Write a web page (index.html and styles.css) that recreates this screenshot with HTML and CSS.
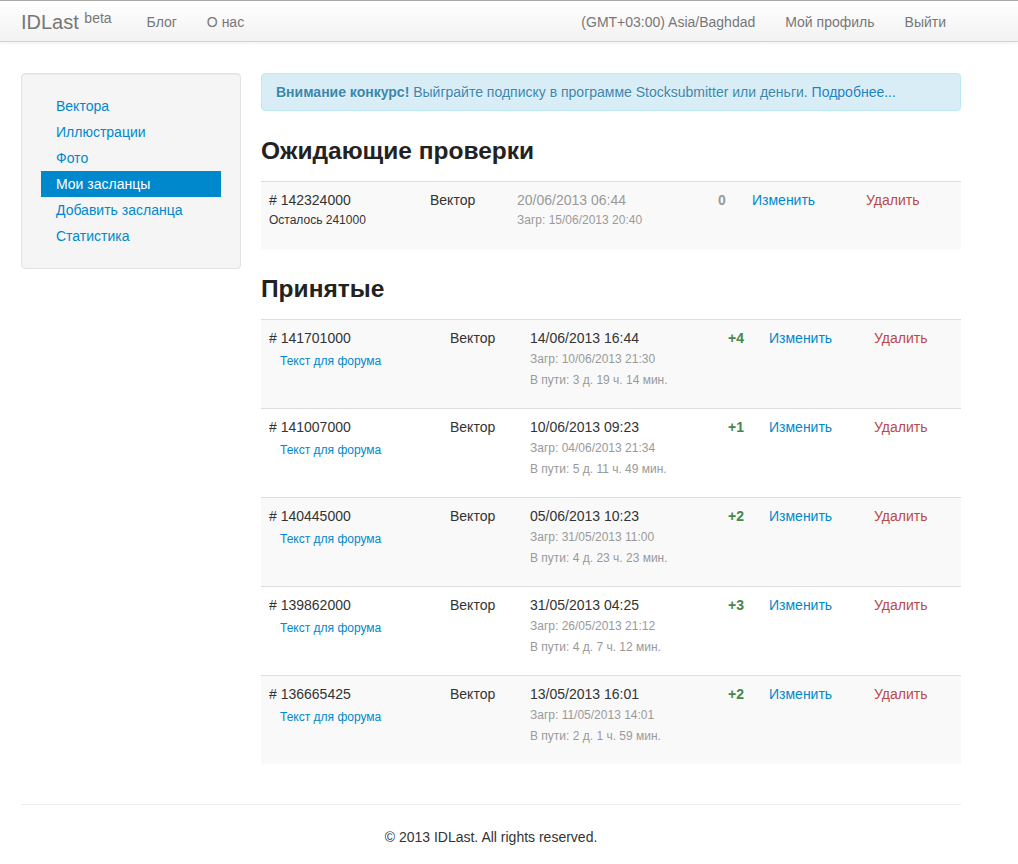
FILE: index.html
```html
<!DOCTYPE html>
<html lang="ru">
<head>
<meta charset="utf-8">
<title>IDLast</title>
<link rel="stylesheet" href="styles.css">
</head>
<body>
<div class="navbar">
  <div class="navbar-in">
    <a class="brand" href="#">IDLast <sup>beta</sup></a>
    <ul class="nav">
      <li><a href="#">Блог</a></li>
      <li><a href="#">О нас</a></li>
    </ul>
    <ul class="nav nav-right">
      <li><a href="#">(GMT+03:00) Asia/Baghdad</a></li>
      <li><a href="#">Мой профиль</a></li>
      <li><a href="#">Выйти</a></li>
    </ul>
  </div>
</div>

<div class="container">
  <div class="row">
    <div class="sidebar">
      <div class="well">
        <ul class="nav-list">
          <li><a href="#">Вектора</a></li>
          <li><a href="#">Иллюстрации</a></li>
          <li><a href="#">Фото</a></li>
          <li class="active"><a href="#">Мои засланцы</a></li>
          <li><a href="#">Добавить засланца</a></li>
          <li><a href="#">Статистика</a></li>
        </ul>
      </div>
    </div>
    <div class="main">
      <div class="alert"><strong>Внимание конкурс!</strong> Выйграйте подписку в программе Stocksubmitter или деньги. <a href="#">Подробнее...</a></div>

      <h3>Ожидающие проверки</h3>
      <table class="table t1">
        <colgroup><col class="c1"><col class="c2"><col class="c3"><col class="c4"><col class="c5"><col class="c6"></colgroup>
        <tbody>
          <tr>
            <td># 142324000<p class="small">Осталось 241000</p></td>
            <td>Вектор</td>
            <td><span class="muted">20/06/2013 06:44</span><div class="small muted">Загр: 15/06/2013 20:40</div></td>
            <td><b class="muted">0</b></td>
            <td><a href="#">Изменить</a></td>
            <td><a class="del" href="#">Удалить</a></td>
          </tr>
        </tbody>
      </table>

      <h3>Принятые</h3>
      <table class="table t2">
        <colgroup><col class="c1"><col class="c2"><col class="c3"><col class="c4"><col class="c5"><col class="c6"></colgroup>
        <tbody>
          <tr>
            <td># 141701000<div><a class="forum" href="#">Текст для форума</a></div></td>
            <td>Вектор</td>
            <td>14/06/2013 16:44<p class="small muted">Загр: 10/06/2013 21:30<br>В пути: 3 д. 19 ч. 14 мин.</p></td>
            <td><b class="plus">+4</b></td>
            <td><a href="#">Изменить</a></td>
            <td><a class="del" href="#">Удалить</a></td>
          </tr>
          <tr>
            <td># 141007000<div><a class="forum" href="#">Текст для форума</a></div></td>
            <td>Вектор</td>
            <td>10/06/2013 09:23<p class="small muted">Загр: 04/06/2013 21:34<br>В пути: 5 д. 11 ч. 49 мин.</p></td>
            <td><b class="plus">+1</b></td>
            <td><a href="#">Изменить</a></td>
            <td><a class="del" href="#">Удалить</a></td>
          </tr>
          <tr>
            <td># 140445000<div><a class="forum" href="#">Текст для форума</a></div></td>
            <td>Вектор</td>
            <td>05/06/2013 10:23<p class="small muted">Загр: 31/05/2013 11:00<br>В пути: 4 д. 23 ч. 23 мин.</p></td>
            <td><b class="plus">+2</b></td>
            <td><a href="#">Изменить</a></td>
            <td><a class="del" href="#">Удалить</a></td>
          </tr>
          <tr>
            <td># 139862000<div><a class="forum" href="#">Текст для форума</a></div></td>
            <td>Вектор</td>
            <td>31/05/2013 04:25<p class="small muted">Загр: 26/05/2013 21:12<br>В пути: 4 д. 7 ч. 12 мин.</p></td>
            <td><b class="plus">+3</b></td>
            <td><a href="#">Изменить</a></td>
            <td><a class="del" href="#">Удалить</a></td>
          </tr>
          <tr>
            <td># 136665425<div><a class="forum" href="#">Текст для форума</a></div></td>
            <td>Вектор</td>
            <td>13/05/2013 16:01<p class="small muted">Загр: 11/05/2013 14:01<br>В пути: 2 д. 1 ч. 59 мин.</p></td>
            <td><b class="plus">+2</b></td>
            <td><a href="#">Изменить</a></td>
            <td><a class="del" href="#">Удалить</a></td>
          </tr>
        </tbody>
      </table>
    </div>
  </div>

  <hr class="foot-hr">
  <footer class="footer">© 2013 IDLast. All rights reserved.</footer>
</div>
</body>
</html>
```

FILE: styles.css
```css
* { box-sizing: border-box; }
html, body { margin: 0; padding: 0; }
body {
  font-family: "Liberation Sans", Arial, Helvetica, sans-serif;
  font-size: 14px;
  line-height: 20px;
  color: #333;
  background: #fff;
}
a { color: #0088cc; text-decoration: none; }
ul { list-style: none; margin: 0; padding: 0; }

/* navbar */
.navbar {
  background: linear-gradient(to bottom, #ffffff, #f2f2f2);
  border-top: 1px solid #a9a9a9;
  border-bottom: 1px solid #d4d4d4;
  box-shadow: 0 1px 4px rgba(0,0,0,0.065);
}
.navbar-in {
  width: 940px;
  margin-left: 21px;
  height: 40px;
  display: flex;
  align-items: center;
}
.brand {
  font-size: 20px;
  color: #777;
  padding: 11px 20px 9px 0;
  line-height: 20px;
}
.brand sup {
  font-size: 14px;
  line-height: 0;
  vertical-align: 6px;
}
.nav { display: flex; }
.nav a {
  display: block;
  padding: 11px 15px 9px;
  color: #777;
  font-size: 14px;
  line-height: 20px;
}
.nav-right { margin-left: auto; margin-right: 0; }

/* layout */
.container {
  width: 940px;
  margin-left: 21px;
  padding-top: 31px;
}
.row { display: flex; gap: 20px; }
.sidebar { width: 220px; flex: none; }
.main { width: 700px; flex: none; }

.well {
  background: #f5f5f5;
  border: 1px solid #e3e3e3;
  border-radius: 4px;
  padding: 19px;
  box-shadow: inset 0 1px 1px rgba(0,0,0,0.05);
}
.nav-list { padding: 0 15px; }
.nav-list a {
  display: block;
  margin: 0 -15px;
  padding: 3px 15px;
  color: #0088cc;
}
.nav-list .active a {
  background: #0088cc;
  color: #fff;
}

.alert {
  background: #d9edf7;
  border: 1px solid #bce8f1;
  color: #3a87ad;
  border-radius: 4px;
  padding: 8px 35px 8px 14px;
  margin-bottom: 20px;
  text-shadow: 0 1px 0 rgba(255,255,255,0.5);
}
.alert a { color: #1a82c4; }

h3 {
  font-size: 24.5px;
  line-height: 40px;
  margin: 10px 0;
  font-weight: bold;
  color: #222;
}

.table {
  width: 100%;
  border-collapse: collapse;
  table-layout: fixed;
  margin-bottom: 20px;
}
.table td {
  padding: 8px;
  vertical-align: top;
  border-top: 1px solid #ddd;
  text-align: left;
}
.table tbody tr:nth-child(odd) td { background: #f9f9f9; }

.t1 .c1 { width: 161px; }
.t1 .c2 { width: 87px; }
.t1 .c3 { width: 201px; }
.t1 .c4 { width: 34px; }
.t1 .c5 { width: 114px; }
.t1 .c6 { width: 103px; }

.t2 .c1 { width: 181px; }
.t2 .c2 { width: 80px; }
.t2 .c3 { width: 198px; }
.t2 .c4 { width: 41px; }
.t2 .c5 { width: 105px; }
.t2 .c6 { width: 95px; }

p { margin: 0 0 10px; }
.small { font-size: 12px; }
.t1 .small { line-height: 21px; }
.t2 .small { line-height: 21px; margin-top: 1px; margin-bottom: 9px; }
.muted { color: #999; }
.plus { color: #468847; }
.del { color: #b94a48; }
.forum {
  display: inline-block;
  font-size: 12px;
  padding: 0 11px;
  line-height: 20px;
  margin-top: 3px;
}

.foot-hr {
  margin: 20px 0;
  border: 0;
  border-top: 1px solid #eee;
  border-bottom: 1px solid #fff;
}
.footer {
  text-align: center;
  line-height: 20px;
  padding-top: 1px;
  padding-bottom: 17px;
}
```
